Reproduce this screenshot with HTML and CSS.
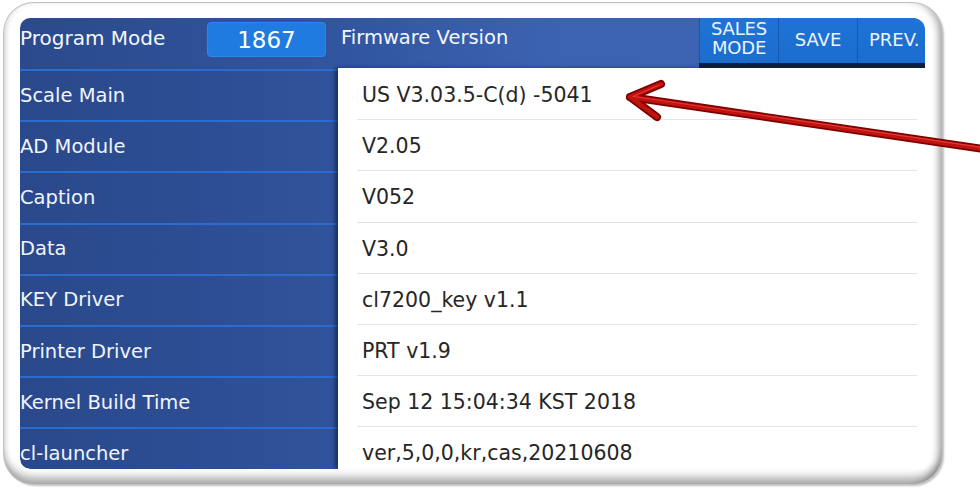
FILE: index.html
```html
<!DOCTYPE html>
<html>
<head>
<meta charset="utf-8">
<link rel="stylesheet" href="styles.css">
</head>
<body>
<div class="page">
  <div class="frame">
    <div class="screen">
      <div class="top">
        <div class="mode">Program Mode</div>
        <div class="code">1867</div>
        <div class="title">Firmware Version</div>
        <div class="btns">
          <div class="btn two">SALES<br>MODE</div>
          <div class="btn">SAVE</div>
          <div class="btn last">PREV.</div>
        </div>
      </div>
      <div class="body">
        <div class="labels">
          <div class="lab">Scale Main</div>
          <div class="lab">AD Module</div>
          <div class="lab">Caption</div>
          <div class="lab">Data</div>
          <div class="lab">KEY Driver</div>
          <div class="lab">Printer Driver</div>
          <div class="lab">Kernel Build Time</div>
          <div class="lab">cl-launcher</div>
        </div>
        <div class="values">
          <div class="val">US V3.03.5-C(d) -5041</div>
          <div class="val">V2.05</div>
          <div class="val">V052</div>
          <div class="val">V3.0</div>
          <div class="val">cl7200_key v1.1</div>
          <div class="val">PRT v1.9</div>
          <div class="val">Sep 12 15:04:34 KST 2018</div>
          <div class="val">ver,5,0,0,kr,cas,20210608</div>
        </div>
      </div>
    </div>
  </div>
  <svg class="arrow" width="980" height="490" viewBox="0 0 980 490">
    <g fill="none" stroke-linecap="round" stroke-linejoin="round">
      <path d="M661 84 L630 97 L657 117 M630 97 L990 150" stroke="#7e0000" stroke-width="8"/>
      <path d="M661 84 L630 97 L657 117 M630 97 L990 150" stroke="#c0120f" stroke-width="4.5"/>
      <path d="M659 85 L633 96.5 M634 96.5 L990 148.5" stroke="#e03a34" stroke-width="1.2"/>
    </g>
  </svg>
</div>
</body>
</html>
```
FILE: styles.css
```css
html, body {
  margin: 0;
  padding: 0;
  background: #ffffff;
}
body {
  font-family: "DejaVu Sans", "Verdana", sans-serif;
}
.page {
  position: relative;
  width: 980px;
  height: 490px;
  padding: 3px 0 0 4px;
  box-sizing: border-box;
  overflow: hidden;
}
.frame {
  width: 938px;
  height: 481px;
  box-sizing: border-box;
  border-radius: 30px;
  background: #ffffff;
  padding: 15px 17px 15px 16px;
  box-shadow:
    0 0 0 1px #c2c2c2,
    inset 0 -11px 8px -4px rgba(0, 0, 0, 0.32),
    inset -8px 0 7px -4px rgba(0, 0, 0, 0.30),
    inset 5px 0 5px -3px rgba(0, 0, 0, 0.12),
    2px 2px 2px rgba(0, 0, 0, 0.25);
}
.screen {
  width: 905px;
  height: 451px;
  border-radius: 10px 12px 0 10px;
  overflow: hidden;
  background: #ffffff;
  display: flex;
  flex-direction: column;
}
.top {
  height: 50px;
  flex: none;
  display: flex;
  align-items: flex-start;
  background: linear-gradient(90deg, #2b4a8d 0%, #31559f 35%, #3c63b2 60%, #3d64b3 100%);
  color: #f4f7fd;
}
.mode {
  width: 187px;
  height: 39px;
  display: flex;
  align-items: center;
  font-size: 20px;
}
.code {
  width: 119px;
  height: 35px;
  margin-top: 4px;
  box-sizing: border-box;
  border-radius: 4px;
  background: #1f7be0;
  border: 1px solid #2d88e8;
  display: flex;
  align-items: center;
  justify-content: center;
  font-size: 23px;
  color: #ffffff;
}
.title {
  flex: 1;
  height: 39px;
  display: flex;
  align-items: center;
  padding-left: 15px;
  font-size: 19.5px;
}
.btns {
  display: flex;
  height: 50px;
  box-sizing: border-box;
  border-bottom: 5px solid #0f1f3f;
}
.btn {
  width: 79px;
  height: 45px;
  box-sizing: border-box;
  background: linear-gradient(180deg, #1e74d6 0%, #1b6ccd 100%);
  border-left: 1px solid #1659b0;
  display: flex;
  align-items: center;
  justify-content: center;
  text-align: center;
  font-size: 18px;
  color: #eef4ff;
  padding-bottom: 3px;
}
.btn.two {
  line-height: 19px;
  font-size: 18px;
  letter-spacing: -0.2px;
  padding-bottom: 6px;
}
.btn.last {
  width: 68px;
  border-top-right-radius: 12px;
  justify-content: flex-start;
  padding-left: 11px;
  white-space: nowrap;
}
.body {
  flex: 1;
  display: flex;
  min-height: 0;
}
.labels {
  width: 318px;
  flex: none;
  padding-top: 1px;
  background: linear-gradient(90deg, #2a498c 0%, #2d4e94 60%, #30539b 100%);
  border-bottom-left-radius: 10px;
}
.lab {
  height: 51.2px;
  box-sizing: border-box;
  border-top: 2px solid #2c6ccf;
  display: flex;
  align-items: center;
  font-size: 19.5px;
  color: #f1f4fb;
  padding-bottom: 1px;
}
.values {
  flex: 1;
  padding-top: 1px;
  background: #ffffff;
  box-shadow: -3px 0 4px rgba(10, 20, 50, 0.55);
}
.val {
  height: 51.2px;
  box-sizing: border-box;
  margin: 0 8px 0 19px;
  padding-left: 5px;
  border-bottom: 1px solid #e4e4e4;
  display: flex;
  align-items: center;
  font-size: 20.5px;
  color: #262626;
  padding-top: 2px;
}
.arrow {
  position: absolute;
  left: 0;
  top: 0;
  pointer-events: none;
}
```
